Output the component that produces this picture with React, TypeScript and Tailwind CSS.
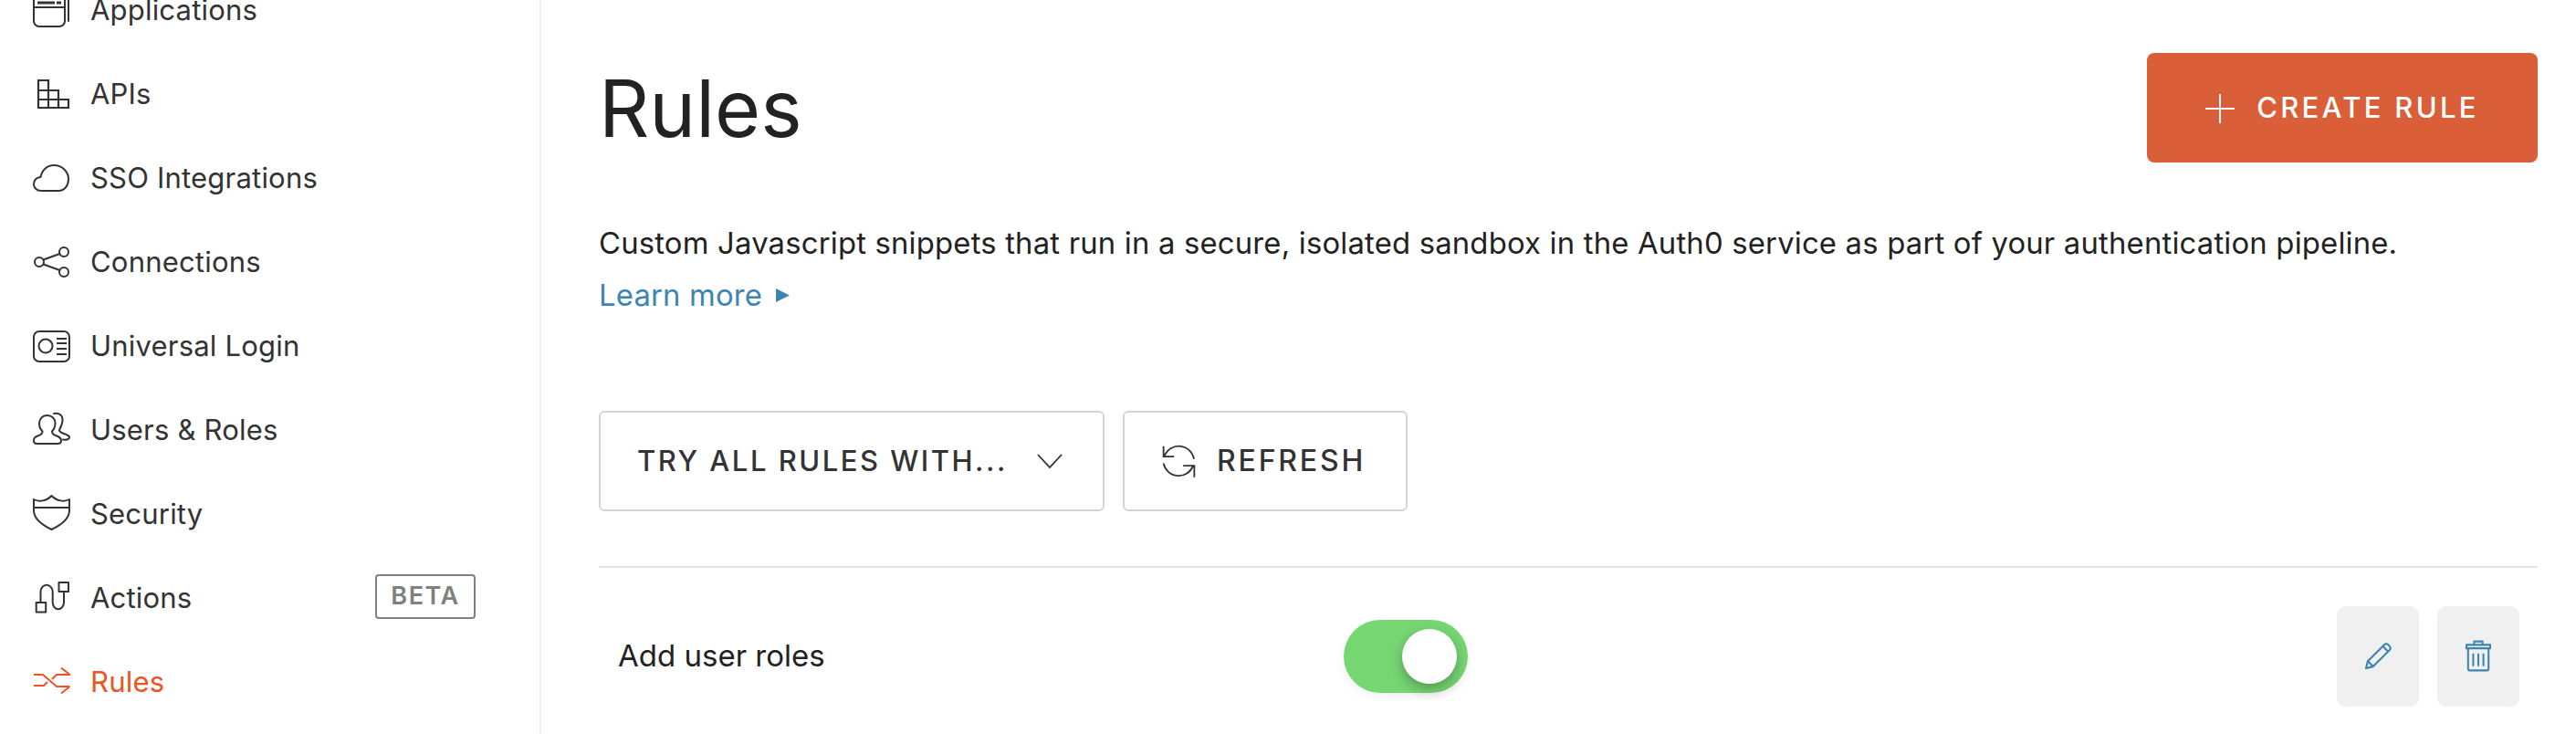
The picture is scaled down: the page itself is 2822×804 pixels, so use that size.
import React from "react";

const font = { fontFamily: "Inter, 'Liberation Sans', sans-serif" };

function Ic({ children, color = "#333" }: { children: React.ReactNode; color?: string }) {
  return (
    <svg width="44" height="42" viewBox="0 0 44 42" fill="none" stroke={color} strokeWidth="2" strokeLinecap="round" strokeLinejoin="round" className="shrink-0 overflow-visible">
      {children}
    </svg>
  );
}

const items: { label: string; icon: React.ReactNode; active?: boolean }[] = [
  {
    label: "Applications",
    icon: (
      <Ic>
        <rect x="2" y="-4" width="34" height="43" rx="6" />
        <path d="M2 18h34M40 10v23" />
        <path d="M6 13h19M27 13h5" strokeWidth="3" strokeLinecap="butt" />
      </Ic>
    ),
  },
  {
    label: "APIs",
    icon: (
      <Ic>
        <path strokeLinecap="square" strokeLinejoin="miter" strokeWidth="2.200" d="M7 6h11v30H7zM7 17h22v19M7 27h33v9H7M18 17v19M29 17v19" />
      </Ic>
    ),
  },
  {
    label: "SSO Integrations",
    icon: (
      <Ic>
        <path d="M10 35C5 35 2 31.500 2 27.500S5 20 9.500 20C11 12 17 7 24 7c9 0 16 7 16 15 0 7-4 13-11 13Z" />
      </Ic>
    ),
  },
  {
    label: "Connections",
    icon: (
      <Ic>
        <circle cx="8" cy="21" r="5" />
        <circle cx="35" cy="10" r="5" />
        <circle cx="35" cy="32" r="5" />
        <path d="M12.500 18.500 30.500 12M12.500 23.500 30.500 30" />
      </Ic>
    ),
  },
  {
    label: "Universal Login",
    icon: (
      <Ic>
        <rect x="2" y="5" width="39" height="33" rx="6" />
        <circle cx="15" cy="21" r="7.500" />
        <path d="M27 13h11M27 18h11M27 24h11M27 30h11" strokeWidth="2.200" strokeLinecap="butt" />
      </Ic>
    ),
  },
  {
    label: "Users & Roles",
    icon: (
      <Ic>
        <path d="M5 36H28c3 0 4-1.500 4-3.500 0-3-2-4-6-5.500-3-1-4-2-4-4.500 2-2 3.500-5 3.500-9C25.500 9 22 5 16.700 5S8 9 8 14c0 3 1.500 6.500 3.500 8.500 0 2.500-1 3.500-4 4.500-4 1.500-5.500 2.500-5.500 5.500 0 2 1.500 3.500 3.500 3.500Z" />
        <path d="M24 3c5-1 9 1 9.500 6 .5 4-1.500 8-3.500 12 0 2 2 3 5 4 3 1 6 2 6 4 0 2-3 3-7 2.500" />
      </Ic>
    ),
  },
  {
    label: "Security",
    icon: (
      <Ic>
        <path d="M2 5c5 3 14 2 19.500-4C27 7 36 8 41 5V17C41 26 32 33 21.500 38 11 33 2 26 2 17Z" />
        <path d="M3 14h37" />
      </Ic>
    ),
  },
  {
    label: "Actions",
    icon: (
      <Ic>
        <rect x="4.700" y="26" width="10.500" height="10.500" />
        <rect x="29.500" y="4" width="10.500" height="10" />
        <path d="M9.500 26V14.300C9.500 10 12.500 6.700 16 6.700s6.700 3.300 6.700 7.600V26c0 4 2.700 7.300 6.100 7.300S35 30 35 26V14" />
      </Ic>
    ),
  },
  {
    label: "Rules",
    active: true,
    icon: (
      <Ic color="#eb5424">
        <path strokeLinecap="butt" d="M32 5.500 41.500 13H27L22 18M41.500 26H27L12 13H2M2 25H13L17 21M32 33.500 41.500 26" />
      </Ic>
    ),
  },
];

export default function App() {
  return (
    <div className="flex h-[804px] w-[2822px] overflow-hidden bg-white" style={font}>
      <aside className="w-[593px] shrink-0 border-r-2 border-[#eeeeee]">
        <nav className="-mt-[35px] flex flex-col pl-[35px] pr-[70px]">
          {items.map((it) => (
            <div key={it.label} className="flex h-[92px] items-center">
              <div className="flex w-[64px] items-center">{it.icon}</div>
              <span className={`text-[31px] tracking-[0.2px] ${it.active ? "text-[#eb5424]" : "text-[#333333]"}`}>{it.label}</span>
              {it.label === "Actions" && (
                <span className="ml-auto -mt-[4px] flex h-[49px] w-[110px] items-center justify-center rounded-[4px] border-2 border-[#808080] text-[27px] font-semibold tracking-[1.500px] text-[#808080]">
                  BETA
                </span>
              )}
            </div>
          ))}
        </nav>
      </aside>

      <main className="min-w-0 flex-1 pl-[63px] pr-[42px]">
        <div className="flex items-start justify-between pt-[58px]">
          <h1 className="text-[86px] leading-[122px] font-normal text-[#222222]">Rules</h1>
          <button className="flex h-[120px] w-[428px] items-center justify-center gap-[24px] rounded-[8px] bg-[#da5f38] pt-[1px] text-[31px] font-medium tracking-[3.300px] text-white">
            <svg width="32" height="32" viewBox="0 0 32 32" stroke="#fff" strokeWidth="2">
              <path d="M16 0v32M0 16h32" />
            </svg>
            CREATE RULE
          </button>
        </div>

        <p className="mt-[58px] text-[32.800px] leading-[57px] text-[#222222] tracking-[0.2px]">
          Custom Javascript snippets that run in a secure, isolated sandbox in the Auth0 service as part of your authentication pipeline.
          <br />
          <span className="inline-flex items-center gap-[14px] text-[#3d85b1]">
            Learn more
            <svg width="17" height="17" viewBox="0 0 16 16" fill="#3d85b1">
              <path d="M1 1l14 7-14 7z" />
            </svg>
          </span>
        </p>

        <div className="mt-[98px] flex gap-[20px]">
          <button className="flex h-[110px] w-[554px] items-center justify-between rounded-[6px] border-2 border-[#d4d4d4] pl-[40px] pr-[44px] text-[31px] font-medium tracking-[2.500px] text-[#333333]">
            TRY ALL RULES WITH...
            <svg width="28" height="16" viewBox="0 0 28 16" fill="none" stroke="#333" strokeWidth="1.800">
              <path d="M1 1l13 14L27 1" />
            </svg>
          </button>
          <button className="flex h-[110px] w-[312px] items-center gap-[23px] rounded-[6px] border-2 border-[#d4d4d4] pl-[41px] text-[32px] font-medium tracking-[2.800px] text-[#333333]">
            <svg width="37" height="37" viewBox="0 0 112 112" fill="none" stroke="#333" strokeWidth="5.500">
              <path d="M5 5V40H40M106 48A51 51 0 0 0 8 38M5 62A51 51 0 0 0 103 70M70 70H107V108" />
            </svg>
            REFRESH
          </button>
        </div>

        <div className="mt-[60px] flex h-[195px] items-center border-t-2 border-[#e3e3e3]">
          <span className="ml-[21px] w-[795px] text-[33px] text-[#222222]">Add user roles</span>
          <div className="relative h-[80px] w-[136px] shrink-0 rounded-full bg-[#76d672] shadow-[0_4px_12px_rgba(0,0,0,0.06)]">
            <div className="absolute right-[12px] top-[10px] h-[60px] w-[60px] rounded-full bg-white shadow-[0_6px_14px_rgba(0,0,0,0.28)]" />
          </div>
          <div className="ml-auto mr-[20px] flex gap-[20px]">
            <button className="flex h-[110px] w-[90px] items-center justify-center rounded-[10px] bg-[#f0f0f0]">
              <svg width="29" height="29" viewBox="0 0 30 30" fill="none" stroke="#3d85b1" strokeWidth="2.200" strokeLinejoin="round">
                <path d="M1 29l2-8L22 2c1-1 3-1 5 1s2 4 1 5L9 27l-8 2ZM3 21l6 6M20 4l6 6" />
              </svg>
            </button>
            <button className="flex h-[110px] w-[90px] items-center justify-center rounded-[10px] bg-[#f0f0f0]">
              <svg width="28" height="35" viewBox="0 0 30 36" fill="none" stroke="#3d85b1" strokeWidth="2.200" strokeLinejoin="round">
                <path d="M10 5V1h10v4M1 5h28v4H1zM3 9v24a2 2 0 0 0 2 2h20a2 2 0 0 0 2-2V9" />
                <path d="M9 15v15M15 15v15M21 15v15" />
              </svg>
            </button>
          </div>
        </div>
      </main>
    </div>
  );
}
